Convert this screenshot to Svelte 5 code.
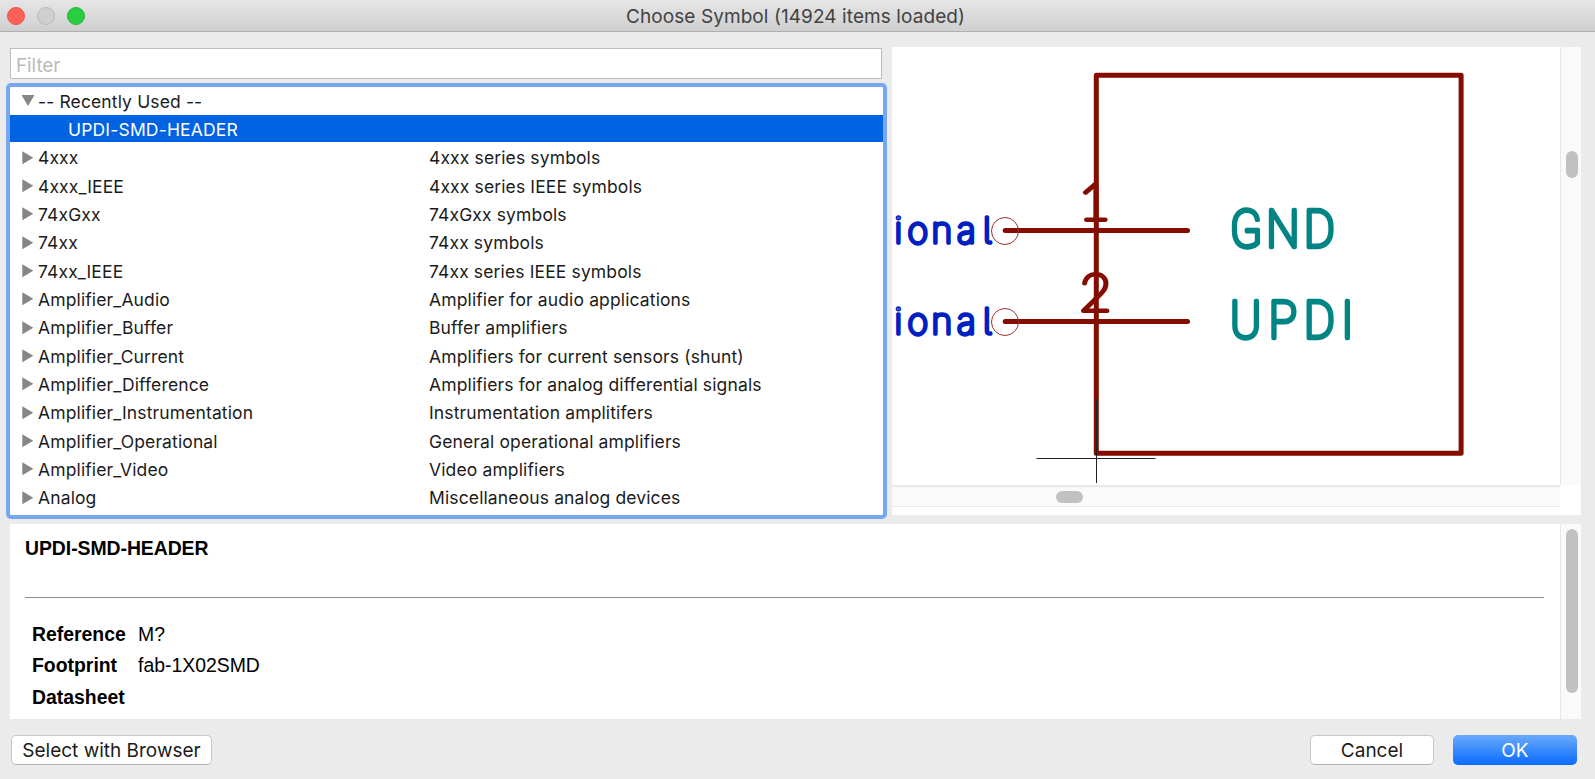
<script>
  const rows = [
    ['4xxx', '4xxx series symbols'],
    ['4xxx_IEEE', '4xxx series IEEE symbols'],
    ['74xGxx', '74xGxx symbols'],
    ['74xx', '74xx symbols'],
    ['74xx_IEEE', '74xx series IEEE symbols'],
    ['Amplifier_Audio', 'Amplifier for audio applications'],
    ['Amplifier_Buffer', 'Buffer amplifiers'],
    ['Amplifier_Current', 'Amplifiers for current sensors (shunt)'],
    ['Amplifier_Difference', 'Amplifiers for analog differential signals'],
    ['Amplifier_Instrumentation', 'Instrumentation amplitifers'],
    ['Amplifier_Operational', 'General operational amplifiers'],
    ['Amplifier_Video', 'Video amplifiers'],
    ['Analog', 'Miscellaneous analog devices']
  ];
  const fields = [
    ['Reference', 'M?'],
    ['Footprint', 'fab-1X02SMD'],
    ['Datasheet', '']
  ];
  const pins = [230.6, 321.6];
</script>

<div class="window">
  <header>
    <div class="lights"><i class="red"></i><i class="off"></i><i class="green"></i></div>
    <h1>Choose Symbol (14924 items loaded)</h1>
  </header>

  <main>
    <section class="left">
      <div class="filter">Filter</div>
      <div class="tree">
        <div class="row">
          <svg class="tri" viewBox="0 0 14 14"><path d="M.5 1h13L7 12z" /></svg>
          <span class="name">-- Recently Used --</span>
        </div>
        <div class="row selected"><span class="name">UPDI-SMD-HEADER</span></div>
        {#each rows as [name, desc]}
          <div class="row">
            <svg class="tri" viewBox="0 0 14 14"><path d="M1.3 .3v13L12.3 6.8z" /></svg>
            <span class="name">{name}</span>
            <span>{desc}</span>
          </div>
        {/each}
      </div>
    </section>

    <section class="preview">
      <svg class="canvas" viewBox="892 47 668 438">
        <g class="pin">
          <rect x="1096.3" y="75.3" width="364.8" height="378" />
          {#each pins as y}
            <path d="M1005.2 {y}H1187.5" />
            <circle cx="1005" cy={y + 0.4} r="13.5" />
          {/each}
        </g>
        <g class="num">
          <text transform="translate(1078.6 219.5) scale(1.1 1.03)">1</text>
          <text transform="translate(1079.6 310.8) scale(1.1 1.03)">2</text>
        </g>
        <g class="label" transform="translate(1230 0) scale(.92 1)">
          <text x="0 39.5 80.5" y="246.7">GND</text>
          <text x="0 42 80.5 120.8" y="337.7">UPDI</text>
        </g>
        <g class="kind">
          {#each pins as y}
            <text x="894.5 907.5 931.5 957 983" y={y + 12}>ional</text>
          {/each}
        </g>
        <path class="cross" d="M1036.5 458.5H1155.5M1096.5 399V483" />
      </svg>
      <div class="vbar"><i></i></div>
      <div class="hbar"><i></i></div>
      <div class="corner"></div>
    </section>
  </main>

  <section class="details">
    <div class="info">
      <h2>UPDI-SMD-HEADER</h2>
      <hr />
      <dl>
        {#each fields as [k, v]}
          <dt>{k}</dt><dd>{v}</dd>
        {/each}
      </dl>
    </div>
    <div class="dbar"><i></i></div>
  </section>

  <footer>
    <button class="browse">Select with Browser</button>
    <button class="cancel">Cancel</button>
    <button class="ok">OK</button>
  </footer>
</div>

<style>
  * { box-sizing: border-box; }
  .window {
    width: 1595px; height: 779px; overflow: hidden; background: #ebebeb;
    display: flex; flex-direction: column;
    font-family: Inter, sans-serif; color: #1b1b1b;
  }
  header {
    height: 32px; flex: none; display: grid; grid-template-columns: 198px 1fr 202px;
    align-items: center; background: linear-gradient(#e6e6e6, #cfcfcf);
    border-bottom: 1px solid #b0b0b0;
  }
  .lights { display: flex; gap: 12px; padding-left: 7px; }
  .lights i { width: 18px; height: 18px; border-radius: 50%; border: 1px solid; }
  .red { background: #ff5f57; border-color: #ec5148 !important; }
  .off { background: #cfcfcf; border-color: #b9b9b9 !important; }
  .green { background: #28cd41; border-color: #20b934 !important; }
  h1 { margin: 0; padding-top: 1px; font-size: 19px; font-weight: 400; text-align: center; color: #424242; letter-spacing: .08px; }
  main { display: flex; height: 487px; flex: none; padding-top: 15px; }
  .left { width: 892px; padding: 1px 0 0 6px; flex: none; }
  .filter {
    margin-left: 4px; width: 872px; height: 31px; background: #fff; border: 1px solid #bdbdbd;
    padding-left: 5px; font-size: 19px; line-height: 34px; color: #bbb; letter-spacing: -.1px;
  }
  .tree {
    margin-top: 4px; width: 881px; height: 436px; border: 4px solid #77a7f3;
    border-radius: 5px; background: #fff; font-size: 17.5px; line-height: 28.33px; letter-spacing: .13px;
  }
  .row { display: flex; height: 28.33px; padding-left: 11px; white-space: nowrap; padding-top: .8px; }
  .row .tri { width: 14px; height: 14px; margin: 6.2px 3px 0 0; fill: #868686; flex: none; }
  .row .name { width: 391px; flex: none; }
  .selected { height: 26.8px; margin-bottom: 1.53px; padding-left: 58px; background: #0063e1; color: #fff; letter-spacing: .18px; }
  .preview {
    width: 689px; height: 468px; background: #fff;
    display: grid; grid-template-columns: 668px 21px; grid-template-rows: 438px 30px;
  }
  .canvas { width: 668px; height: 438px; }
  .vbar, .dbar { background: #fafafa; border-left: 1px solid #e6e6e6; }
  .vbar i, .dbar i { display: block; width: 12px; border-radius: 6px; background: #c1c1c1; margin-left: 5px; }
  .vbar i { margin-top: 104px; height: 27px; }
  .hbar { height: 22px; background: #fafafa; border-top: 2px solid #e9e9e9; border-bottom: 1px solid #ebebeb; padding: 4px 0 0 163.5px; }
  .hbar i { display: block; width: 27px; height: 12px; border-radius: 6px; background: #c1c1c1; }
  .pin rect, .pin path { fill: none; stroke: #840c00; stroke-width: 5; stroke-linejoin: round; stroke-linecap: round; }
  .pin circle { fill: none; stroke: #a03030; stroke-width: 1; }
  text { stroke-linejoin: round; stroke-linecap: round; }
  .num text { font: 100 50px Lato, sans-serif; fill: #840c00; stroke: #840c00; stroke-width: 4; }
  .label text { font: 100 51px Roboto, sans-serif; fill: #008484; stroke: #008484; stroke-width: 4.4; }
  .kind text { font: 100 35.5px Inter, sans-serif; font-feature-settings: "cv05"; fill: #0020c2; stroke: #0020c2; stroke-width: 3.7; }
  .cross { fill: none; stroke: #222; stroke-width: 1; }
  .details { margin: 5px 0 0 10px; width: 1571px; height: 195px; flex: none; background: #fff; display: flex; }
  .info { width: 1550px; padding: 15px 16px 0 15px; font-family: "Liberation Sans", Arial, sans-serif; font-size: 19.4px; color: #000; }
  h2 { margin: 0; font-size: 19.4px; line-height: 18px; letter-spacing: -.05px; }
  hr { margin: 40px 0 21px; border: 0; height: 1px; background: #8c8c8c; }
  dl { margin: 0; padding-left: 7px; display: grid; grid-template-columns: 106px 1fr; grid-auto-rows: 31.3px; line-height: 31px; }
  dt { font-weight: 700; }
  dd { margin: 0; }
  .dbar { width: 21px; padding-top: 5px; }
  .dbar i { height: 164px; }
  footer { display: flex; padding: 16px 18px 0 11px; }
  button {
    height: 30px; padding: 0; border: 1px solid #c8c8c8; border-bottom-color: #b3b3b3; border-radius: 5px;
    background: #fff; font: 19px Inter, sans-serif; color: #1b1b1b; line-height: 30px;
  }
  .browse { width: 201px; margin-right: auto; }
  .cancel { width: 124px; margin-right: 19px; }
  .ok { width: 124px; border: 0; padding-top: 1px; background: linear-gradient(#6aaafb, #0a6bff); color: #fff; }
</style>
